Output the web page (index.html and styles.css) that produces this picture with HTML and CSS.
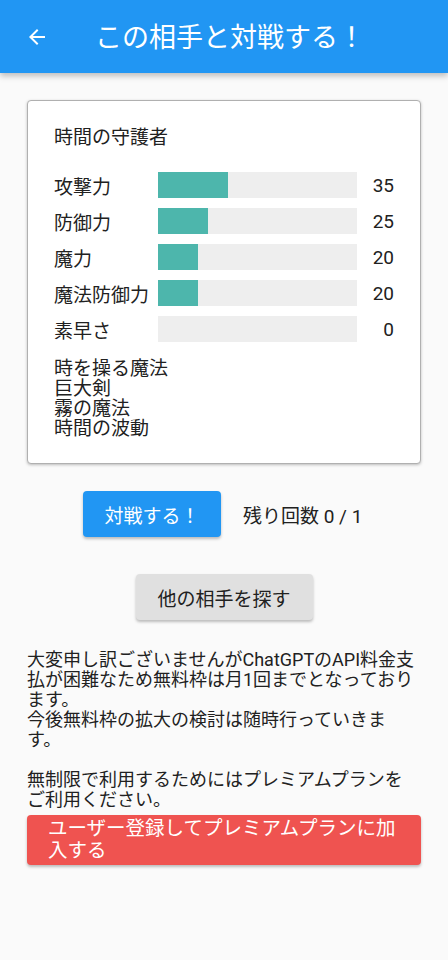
FILE: index.html
```html
<!DOCTYPE html>
<html lang="ja">
  <head>
    <meta charset="UTF-8" />
    <meta name="viewport" content="width=device-width, initial-scale=1.0" />
    <title>この相手と対戦する！</title>
    <link rel="stylesheet" href="styles.css">
  </head>
  <body>
    <div class="app-bar">
      <svg class="back" width="24" height="24" viewBox="0 0 24 24">
        <path d="M20 11H7.83l5.59-5.59L12 4l-8 8 8 8 1.41-1.41L7.83 13H20v-2z" fill="#fff" />
      </svg>
      <div class="app-title">この相手と対戦する！</div>
    </div>

    <div class="content">
      <div class="card">
        <div class="enemy-name">時間の守護者</div>
        <div class="stats">
          <div class="stat-row">
            <span class="stat-label">攻撃力</span>
            <div class="bar"><div class="bar-fill" style="width: 35%"></div></div>
            <span class="stat-value">35</span>
          </div>
          <div class="stat-row">
            <span class="stat-label">防御力</span>
            <div class="bar"><div class="bar-fill" style="width: 25%"></div></div>
            <span class="stat-value">25</span>
          </div>
          <div class="stat-row">
            <span class="stat-label">魔力</span>
            <div class="bar"><div class="bar-fill" style="width: 20%"></div></div>
            <span class="stat-value">20</span>
          </div>
          <div class="stat-row">
            <span class="stat-label">魔法防御力</span>
            <div class="bar"><div class="bar-fill" style="width: 20%"></div></div>
            <span class="stat-value">20</span>
          </div>
          <div class="stat-row">
            <span class="stat-label">素早さ</span>
            <div class="bar"><div class="bar-fill" style="width: 0%"></div></div>
            <span class="stat-value">0</span>
          </div>
        </div>
        <div class="skills">
          <div>時を操る魔法</div>
          <div>巨大剣</div>
          <div>霧の魔法</div>
          <div>時間の波動</div>
        </div>
      </div>

      <div class="battle-row">
        <button class="btn btn-primary">対戦する！</button>
        <span class="remaining">残り回数 0 / 1</span>
      </div>

      <div class="other-row">
        <button class="btn btn-grey">他の相手を探す</button>
      </div>

      <p class="notice">大変申し訳ございませんがChatGPTのAPI料金支払が困難なため無料枠は月1回までとなっております。<br>今後無料枠の拡大の検討は随時行っていきます。<br><br>無制限で利用するためにはプレミアムプランをご利用ください。</p>

      <button class="btn btn-red">ユーザー登録してプレミアムプランに加入する</button>
    </div>
  </body>
</html>
```

FILE: styles.css
```css
body {
  margin: 0;
  background-color: #fafafa;
  font-family: Roboto, "Noto Sans CJK JP", sans-serif;
  color: #212121;
  width: 448px;
  min-height: 960px;
}

.app-bar {
  height: 73px;
  background-color: #2196f3;
  display: flex;
  align-items: center;
  padding-left: 25px;
  box-shadow: 0 3px 6px rgba(0, 0, 0, 0.25);
  position: relative;
}

.back {
  width: 24px;
  height: 24px;
}

.app-title {
  color: #fff;
  font-size: 27px;
  margin-left: 46px;
  margin-bottom: 2px;
}

.content {
  padding: 27px 27px 0 27px;
}

.card {
  border: 1px solid #b0b0b0;
  border-radius: 4px;
  background-color: #fff;
  box-shadow: 0 1px 3px rgba(0, 0, 0, 0.25);
  padding: 25px 26px 25px 26px;
  height: 312px;
}

.enemy-name {
  font-size: 19px;
  line-height: 24px;
  margin-bottom: 22px;
}

.stats {
  display: flex;
  flex-direction: column;
  gap: 10px;
}

.stat-row {
  display: flex;
  align-items: center;
  height: 26px;
  font-size: 19px;
}

.stat-label {
  width: 104px;
}

.bar {
  width: 199px;
  height: 26px;
  background-color: #eeeeee;
}

.bar-fill {
  height: 100%;
  background-color: #4db6ac;
}

.stat-value {
  flex: 1;
  text-align: right;
}

.skills {
  margin-top: 17px;
  font-size: 19px;
  line-height: 20px;
}

.btn {
  border: none;
  border-radius: 4px;
  font-family: inherit;
  font-size: 19px;
  height: 46px;
  cursor: pointer;
  box-shadow: 0 2px 3px rgba(0, 0, 0, 0.25);
}

.btn-primary {
  background-color: #2196f3;
  color: #fff;
  width: 138px;
}

.btn-grey {
  background-color: #e0e0e0;
  color: #212121;
  width: 177px;
}

.btn-red {
  background-color: #ef5350;
  color: #fff;
  width: 100%;
  height: auto;
  text-align: left;
  padding: 3px 21px 3px 21px;
  font-size: 19.5px;
  line-height: 22px;
}

.battle-row {
  margin-top: 27px;
  display: flex;
  align-items: center;
  padding-left: 56px;
}

.remaining {
  font-size: 19px;
  margin-left: 22px;
}

.other-row {
  margin-top: 37px;
  display: flex;
  justify-content: center;
}

.notice {
  margin: 30px 0 5px;
  width: 392px;
  font-size: 18px;
  line-height: 20px;
}
```
